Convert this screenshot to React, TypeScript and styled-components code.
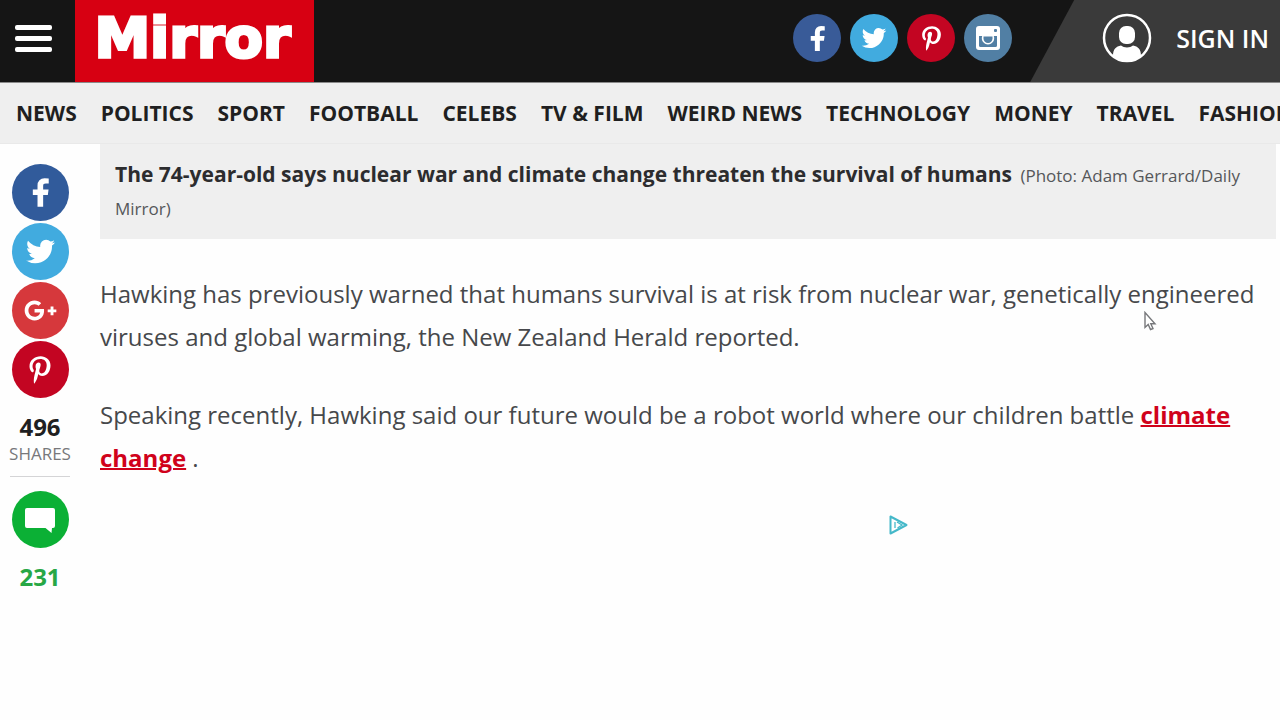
import React from "react";
import styled, { createGlobalStyle } from "styled-components";
import { FaPinterestP, FaGooglePlusG } from "react-icons/fa";

const GlobalStyle = createGlobalStyle`
  *, *::before, *::after { box-sizing: border-box; }
  body {
    margin: 0;
    background: #fefefe;
    color: #46484b;
    font-family: "Open Sans", "Liberation Sans", sans-serif;
    overflow-x: hidden;
  }
`;

const Header = styled.header`
  display: flex;
  align-items: stretch;
  height: 83px;
  background: #151515;
  border-bottom: 1px solid #8a8a8a;
`;

const MenuButton = styled.button`
  width: 75px;
  padding: 0 23px 6px 15px;
  border: 0;
  background: none;
  display: flex;
  flex-direction: column;
  justify-content: center;
  gap: 6px;
`;

const MenuBar = styled.span`
  display: block;
  height: 5px;
  border-radius: 2px;
  background: #fff;
`;

const Logo = styled.a`
  display: flex;
  align-items: center;
  justify-content: center;
  width: 239px;
  padding: 0 4px 6px 0;
  background: #d70012;
  color: #fff;
  font-family: "DejaVu Sans", sans-serif;
  font-size: 56px;
  line-height: 76px;
  font-weight: 700;
  -webkit-text-stroke: 3px #fff;
  text-decoration: none;
`;

const HeaderSocial = styled.div`
  display: flex;
  align-items: center;
  gap: 9px;
  margin-left: auto;
  padding: 0 18px 6px 0;
`;

const RoundLink = styled.a<{ $bg: string; $size: number }>`
  display: flex;
  align-items: center;
  justify-content: center;
  flex: none;
  width: ${(p) => p.$size}px;
  height: ${(p) => p.$size}px;
  border-radius: 50%;
  background: ${(p) => p.$bg};
  color: #fff;
`;

const SignIn = styled.button`
  display: flex;
  align-items: center;
  gap: 24px;
  padding: 0 11px 6px 72px;
  border: 0;
  background: #3a3a3a;
  clip-path: polygon(44px 0, 100% 0, 100% 100%, 0 100%);
  color: #fff;
  font-family: inherit;
  font-size: 25px;
  font-weight: 600;
  white-space: nowrap;
`;

const Nav = styled.nav`
  display: flex;
  align-items: center;
  gap: 24px;
  height: 61px;
  padding-left: 16px;
  background: #efefef;
  border-bottom: 1px solid #e9e9e9;
  overflow: hidden;
`;

const NavLink = styled.a`
  color: #1f1f21;
  font-size: 21px;
  line-height: 28px;
  font-weight: 700;
  white-space: nowrap;
  text-decoration: none;
`;

const Page = styled.div`
  display: flex;
  align-items: flex-start;
`;

const ShareRail = styled.aside`
  display: flex;
  flex-direction: column;
  align-items: center;
  gap: 2px;
  width: 80px;
  flex: none;
  padding: 20px 10px 0;
`;

const Count = styled.strong<{ $green?: boolean }>`
  margin-top: 11px;
  color: ${(p) => (p.$green ? "#27a745" : "#1f1f21")};
  font-size: 24px;
  line-height: 32px;
`;

const ShareLabel = styled.span`
  color: #77787b;
  font-size: 17px;
  line-height: 17px;
`;

const Rule = styled.hr`
  width: 100%;
  margin: 12px 0;
  border: 0;
  border-top: 1px solid #d4d4d6;
`;

const Article = styled.main`
  flex: 1;
  min-width: 0;
  padding: 0 4px 0 20px;
`;

const Caption = styled.p`
  margin: 0;
  padding: 14px 15px;
  background: #efefef;
  color: #55575a;
  font-size: 17px;
  line-height: 33px;
`;

const CaptionTitle = styled.strong`
  margin-right: 4px;
  color: #2c2c2e;
  font-size: 21px;
`;

const Body = styled.div`
  padding-top: 33px;
  font-size: 24px;
  line-height: 43px;
`;

const Paragraph = styled.p`
  margin: 0 0 35px;
`;

const TextLink = styled.a`
  color: #d0021b;
  font-weight: 700;
  text-decoration-thickness: 2px;
`;

const AdSlot = styled.aside`
  display: flex;
  justify-content: flex-end;
  width: 440px;
  margin: 0 auto;
  padding-top: 1px;
`;

const Pointer = styled.svg`
  position: absolute;
  left: 1143px;
  top: 311px;
`;

const sections = [
  "NEWS", "POLITICS", "SPORT", "FOOTBALL", "CELEBS", "TV & FILM",
  "WEIRD NEWS", "TECHNOLOGY", "MONEY", "TRAVEL", "FASHION",
];

const FacebookIcon = ({ size }: { size: number }) => (
  <svg width={size} height={size} viewBox="0 0 1792 1792" fill="currentColor" aria-hidden="true">
    <path d="M1343 140v264h-157q-86 0-116 36t-30 108v189h293l-39 296h-254v631H734v-631H479V737h255V519q0-186 104-288.500T1115 128q147 0 228 12z" />
  </svg>
);

const TwitterIcon = ({ size }: { size: number }) => (
  <svg width={size} height={size} viewBox="0 0 1792 1792" fill="currentColor" aria-hidden="true">
    <path d="M1684 408q-67 98-162 167 1 14 1 42 0 130-38 259.500T1369.500 1125 1185 1335.500t-258 146-323 54.500q-271 0-496-145 35 4 78 4 225 0 401-138-105-2-188-64.500T285 1033q33 5 61 5 43 0 85-11-112-23-185.500-111.500T172 710v-4q68 38 146 41-66-44-105-115t-39-154q0-88 44-163 121 149 294.500 238.500T884 653q-8-38-8-74 0-134 94.500-228.500T1199 256q140 0 236 102 109-21 205-78-37 115-142 178 93-10 186-50z" />
  </svg>
);

const InstagramIcon = () => (
  <svg width="26" height="26" viewBox="0 0 26 26" aria-hidden="true">
    <rect x="1" y="1" width="24" height="24" rx="3" fill="#fff" />
    <path d="M4 11h3.200a6.200 6.200 0 1 0 11.600 0H22v9.500a1.500 1.500 0 0 1-1.500 1.500h-15A1.500 1.500 0 0 1 4 20.500z" fill="#517fa4" />
    <path d="M8.500 11.500h9v2a4.500 4.500 0 0 1-9 0z" fill="#517fa4" />
    <rect x="19" y="4" width="3" height="3" rx="1" fill="#517fa4" />
  </svg>
);

const UserIcon = () => (
  <svg width="50" height="50" viewBox="0 0 50 50" aria-hidden="true">
    <circle cx="25" cy="25" r="23" fill="none" stroke="#fff" strokeWidth="2.500" />
    <rect x="17" y="13" width="16" height="18" rx="7" fill="#fff" />
    <path d="M11 43c0-7 3-9.500 8-10.500 3 2.500 9 2.500 12 0 5 1 8 3.500 8 10.500-8 7-20 7-28 0z" fill="#fff" />
  </svg>
);

const CommentIcon = () => (
  <svg width="32" height="28" viewBox="0 0 32 28" aria-hidden="true">
    <path d="M3 2h26a2 2 0 0 1 2 2v16a2 2 0 0 1-2 2h-1l-.5 5-6-5H3a2 2 0 0 1-2-2V4a2 2 0 0 1 2-2z" fill="#fff" />
  </svg>
);

const AdChoicesIcon = () => (
  <svg width="19" height="20" viewBox="0 0 19 20" aria-hidden="true">
    <path d="M1.500 1.500v17L17.500 10z" fill="none" stroke="#45b8c9" strokeWidth="2" strokeLinejoin="round" />
    <path d="M6 7v6M8.500 13l4.500-3-5-3" fill="none" stroke="#45b8c9" strokeWidth="1.300" />
  </svg>
);

export default function App() {
  return (
    <>
      <GlobalStyle />
      <Header>
        <MenuButton aria-label="Menu">
          <MenuBar />
          <MenuBar />
          <MenuBar />
        </MenuButton>
        <Logo href="#">Mirror</Logo>
        <HeaderSocial>
          <RoundLink href="#" aria-label="Facebook" $bg="#395b98" $size={48}><FacebookIcon size={29} /></RoundLink>
          <RoundLink href="#" aria-label="Twitter" $bg="#41abdf" $size={48}><TwitterIcon size={28} /></RoundLink>
          <RoundLink href="#" aria-label="Pinterest" $bg="#c30522" $size={48}><FaPinterestP size={25} /></RoundLink>
          <RoundLink href="#" aria-label="Instagram" $bg="#517fa4" $size={48}><InstagramIcon /></RoundLink>
        </HeaderSocial>
        <SignIn>
          <UserIcon />
          SIGN IN
        </SignIn>
      </Header>
      <Nav>
        {sections.map((name) => (
          <NavLink href="#" key={name}>{name}</NavLink>
        ))}
      </Nav>
      <Page>
        <ShareRail>
          <RoundLink href="#" aria-label="Share on Facebook" $bg="#315b9b" $size={57}><FacebookIcon size={33} /></RoundLink>
          <RoundLink href="#" aria-label="Share on Twitter" $bg="#41abdf" $size={57}><TwitterIcon size={33} /></RoundLink>
          <RoundLink href="#" aria-label="Share on Google Plus" $bg="#d6383c" $size={57}><FaGooglePlusG size={33} /></RoundLink>
          <RoundLink href="#" aria-label="Share on Pinterest" $bg="#c30522" $size={57}><FaPinterestP size={28} /></RoundLink>
          <Count>496</Count>
          <ShareLabel>SHARES</ShareLabel>
          <Rule />
          <RoundLink href="#" aria-label="Comments" $bg="#0bb035" $size={57}><CommentIcon /></RoundLink>
          <Count $green>231</Count>
        </ShareRail>
        <Article>
          <Caption>
            <CaptionTitle>The 74-year-old says nuclear war and climate change threaten the survival of humans</CaptionTitle>{" "}
            (Photo: Adam Gerrard/Daily Mirror)
          </Caption>
          <Body>
            <Paragraph>
              Hawking has previously warned that humans survival is at risk from nuclear war, genetically engineered
              viruses and global warming, the New Zealand Herald reported.
            </Paragraph>
            <Paragraph>
              Speaking recently, Hawking said our future would be a robot world where our children battle{" "}
              <TextLink href="#">climate change</TextLink> .
            </Paragraph>
          </Body>
          <AdSlot>
            <AdChoicesIcon />
          </AdSlot>
        </Article>
      </Page>
      <Pointer width="14" height="20" viewBox="0 0 14 20" aria-hidden="true">
        <path d="M2 1.500v15l3.200-3 2.300 5 2.500-1-2.200-4.800H12z" fill="#fff" stroke="#77787b" strokeWidth="1.400" />
      </Pointer>
    </>
  );
}
